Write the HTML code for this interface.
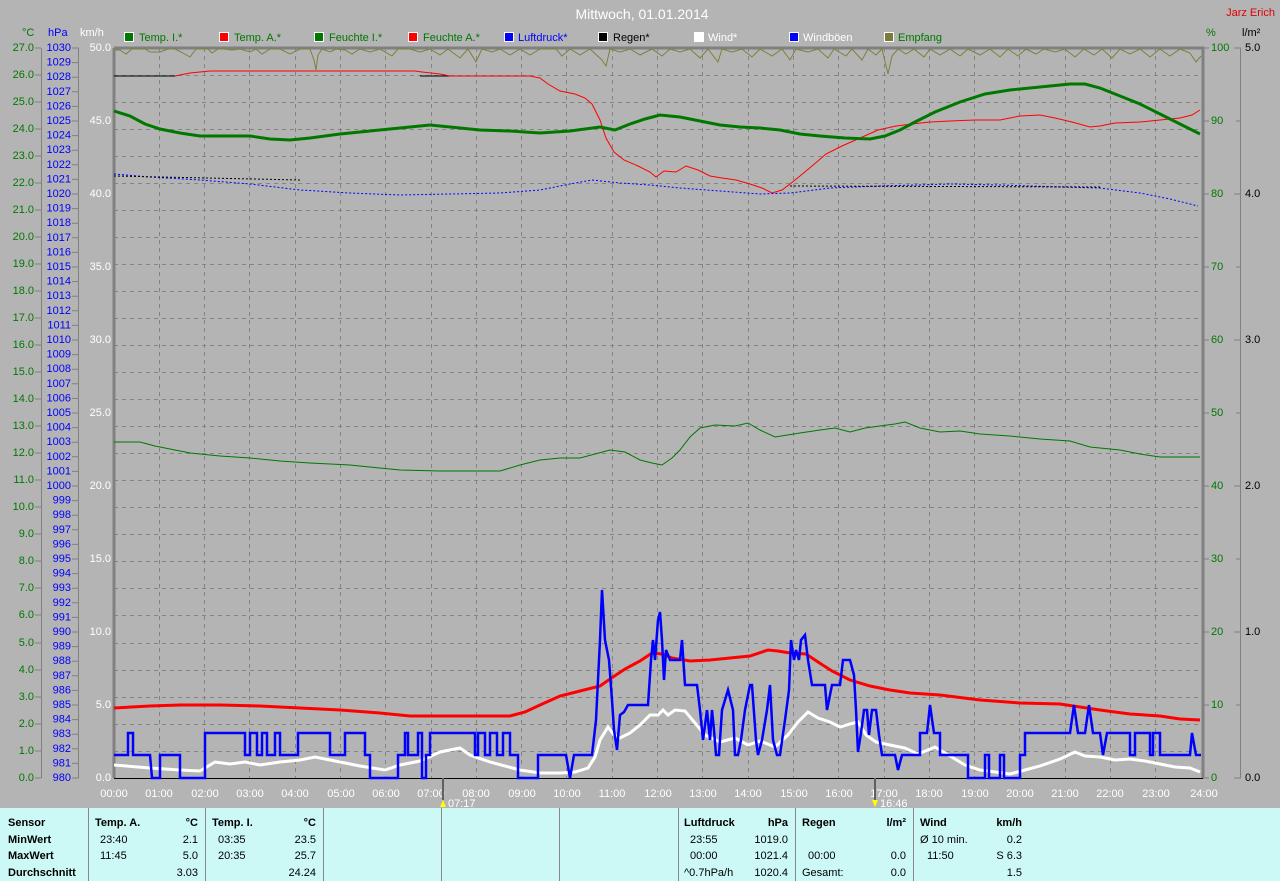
<!DOCTYPE html>
<html><head><meta charset="utf-8"><style>
body{margin:0;width:1280px;height:881px;overflow:hidden;background:#b4b4b4;font-family:"Liberation Sans",sans-serif}
svg{position:absolute;left:0;top:0}
.l{font-size:11px;text-anchor:end;dominant-baseline:central}
.r{font-size:11px;dominant-baseline:central}
.h{font-size:11px;fill:#fff;text-anchor:middle}
.p{font-size:11px;fill:#000}
.b{font-weight:bold}
</style></head><body>
<svg width="1280" height="881" viewBox="0 0 1280 881">
<rect x="0" y="808" width="1280" height="73" fill="#ccf9f5"/>
<g stroke="#888" stroke-width="1">
<line x1="88.5" y1="808" x2="88.5" y2="881"/><line x1="205.5" y1="808" x2="205.5" y2="881"/><line x1="323.5" y1="808" x2="323.5" y2="881"/><line x1="441.5" y1="808" x2="441.5" y2="881"/><line x1="559.5" y1="808" x2="559.5" y2="881"/><line x1="678.5" y1="808" x2="678.5" y2="881"/><line x1="795.5" y1="808" x2="795.5" y2="881"/><line x1="913.5" y1="808" x2="913.5" y2="881"/>
</g>
<g class="p">
<text x="8" y="826" class="b">Sensor</text><text x="8" y="843" class="b">MinWert</text><text x="8" y="859" class="b">MaxWert</text><text x="8" y="876" class="b">Durchschnitt</text>
<text x="95" y="826" class="b">Temp. A.</text><text x="198" y="826" class="b" text-anchor="end">°C</text>
<text x="100" y="843">23:40</text><text x="198" y="843" text-anchor="end">2.1</text>
<text x="100" y="859">11:45</text><text x="198" y="859" text-anchor="end">5.0</text>
<text x="198" y="876" text-anchor="end">3.03</text>
<text x="212" y="826" class="b">Temp. I.</text><text x="316" y="826" class="b" text-anchor="end">°C</text>
<text x="218" y="843">03:35</text><text x="316" y="843" text-anchor="end">23.5</text>
<text x="218" y="859">20:35</text><text x="316" y="859" text-anchor="end">25.7</text>
<text x="316" y="876" text-anchor="end">24.24</text>
<text x="684" y="826" class="b">Luftdruck</text><text x="788" y="826" class="b" text-anchor="end">hPa</text>
<text x="690" y="843">23:55</text><text x="788" y="843" text-anchor="end">1019.0</text>
<text x="690" y="859">00:00</text><text x="788" y="859" text-anchor="end">1021.4</text>
<text x="684" y="876">^0.7hPa/h</text><text x="788" y="876" text-anchor="end">1020.4</text>
<text x="802" y="826" class="b">Regen</text><text x="906" y="826" class="b" text-anchor="end">l/m²</text>
<text x="808" y="859">00:00</text><text x="906" y="859" text-anchor="end">0.0</text>
<text x="802" y="876">Gesamt:</text><text x="906" y="876" text-anchor="end">0.0</text>
<text x="920" y="826" class="b">Wind</text><text x="1022" y="826" class="b" text-anchor="end">km/h</text>
<text x="920" y="843">Ø 10 min.</text><text x="1022" y="843" text-anchor="end">0.2</text>
<text x="927" y="859">11:50</text><text x="1022" y="859" text-anchor="end">S 6.3</text>
<text x="1022" y="876" text-anchor="end">1.5</text>
</g>
<text x="642" y="19" font-size="14" fill="#fff" text-anchor="middle">Mittwoch, 01.01.2014</text>
<text x="1275" y="16" font-size="11" fill="#e00000" text-anchor="end">Jarz Erich</text>
<g font-size="11">
<text x="22" y="36" fill="#007800">°C</text><text x="48" y="36" fill="#0000ff">hPa</text><text x="80" y="36" fill="#fff">km/h</text>
<text x="1206" y="36" fill="#007800">%</text><text x="1242" y="36" fill="#000">l/m²</text>
</g>
<g font-size="11">
<rect x="124.5" y="32.5" width="9" height="9" fill="#007800" stroke="#fff"/><text x="139" y="41" fill="#007800">Temp. I.*</text>
<rect x="219.5" y="32.5" width="9" height="9" fill="#ff0000" stroke="#fff"/><text x="234" y="41" fill="#007800">Temp. A.*</text>
<rect x="314.5" y="32.5" width="9" height="9" fill="#007800" stroke="#fff"/><text x="329" y="41" fill="#007800">Feuchte I.*</text>
<rect x="408.5" y="32.5" width="9" height="9" fill="#ff0000" stroke="#fff"/><text x="423" y="41" fill="#007800">Feuchte A.*</text>
<rect x="504.5" y="32.5" width="9" height="9" fill="#0000ff" stroke="#fff"/><text x="518" y="41" fill="#0000ff">Luftdruck*</text>
<rect x="598.5" y="32.5" width="9" height="9" fill="#000" stroke="#fff"/><text x="613" y="41" fill="#000">Regen*</text>
<rect x="694.5" y="32.5" width="9" height="9" fill="#fff" stroke="#fff"/><text x="708" y="41" fill="#fff">Wind*</text>
<rect x="789.5" y="32.5" width="9" height="9" fill="#0000ff" stroke="#fff"/><text x="803" y="41" fill="#fff">Windböen</text>
<rect x="884.5" y="32.5" width="9" height="9" fill="#7a7a3a" stroke="#fff"/><text x="898" y="41" fill="#007800">Empfang</text>
</g>
<g stroke="#848484" stroke-dasharray="4,4" stroke-width="1">
<path d="M114 75.5H1201M114 102.5H1201M114 129.5H1201M114 156.5H1201M114 183.5H1201M114 210.5H1201M114 237.5H1201M114 264.5H1201M114 291.5H1201M114 318.5H1201M114 345.5H1201M114 372.5H1201M114 399.5H1201M114 426.5H1201M114 453.5H1201M114 480.5H1201M114 507.5H1201M114 534.5H1201M114 561.5H1201M114 588.5H1201M114 615.5H1201M114 643.5H1201M114 670.5H1201M114 697.5H1201M114 724.5H1201M114 751.5H1201"/>
<path d="M159.5 48V778M204.5 48V778M249.5 48V778M295.5 48V778M340.5 48V778M385.5 48V778M431.5 48V778M476.5 48V778M521.5 48V778M566.5 48V778M612.5 48V778M657.5 48V778M702.5 48V778M748.5 48V778M793.5 48V778M838.5 48V778M884.5 48V778M929.5 48V778M974.5 48V778M1019.5 48V778M1065.5 48V778M1110.5 48V778M1155.5 48V778"/>
</g>
<g stroke="#808080" stroke-width="3" fill="none"><path d="M114 48V778M114 48H1203V778"/></g>
<line x1="114" y1="778.5" x2="1203" y2="778.5" stroke="#000"/>
<g stroke="#808080" fill="none">
<line x1="41.5" y1="48" x2="41.5" y2="778"/><line x1="78.5" y1="48" x2="78.5" y2="778"/>
<path d="M35 48H41M35 75H41M35 102H41M35 129H41M35 156H41M35 183H41M35 210H41M35 237H41M35 264H41M35 291H41M35 318H41M35 345H41M35 372H41M35 399H41M35 426H41M35 453H41M35 480H41M35 507H41M35 534H41M35 561H41M35 588H41M35 615H41M35 643H41M35 670H41M35 697H41M35 724H41M35 751H41M35 778H41"/>
<path d="M72 48H79M72 62.6H79M72 77.2H79M72 91.8H79M72 106.4H79M72 121H79M72 135.6H79M72 150.2H79M72 164.8H79M72 179.4H79M72 194H79M72 208.6H79M72 223.2H79M72 237.8H79M72 252.4H79M72 267H79M72 281.6H79M72 296.2H79M72 310.8H79M72 325.4H79M72 340H79M72 354.6H79M72 369.2H79M72 383.8H79M72 398.4H79M72 413H79M72 427.6H79M72 442.2H79M72 456.8H79M72 471.4H79M72 486H79M72 500.6H79M72 515.2H79M72 529.8H79M72 544.4H79M72 559H79M72 573.6H79M72 588.2H79M72 602.8H79M72 617.4H79M72 632H79M72 646.6H79M72 661.2H79M72 675.8H79M72 690.4H79M72 705H79M72 719.6H79M72 734.2H79M72 748.8H79M72 763.4H79M72 778H79"/>
<path d="M1203 48H1209M1203 121H1209M1203 194H1209M1203 267H1209M1203 340H1209M1203 413H1209M1203 486H1209M1203 559H1209M1203 632H1209M1203 705H1209M1203 778H1209"/>
<line x1="1240.5" y1="48" x2="1240.5" y2="778"/>
<path d="M1234 48H1241M1234 194H1241M1234 340H1241M1234 486H1241M1234 632H1241M1234 778H1241M1236 121H1241M1236 267H1241M1236 413H1241M1236 559H1241M1236 705H1241"/>
</g>
<g class="l" fill="#007800">
<text x="34" y="48">27.0</text><text x="34" y="75">26.0</text><text x="34" y="102">25.0</text><text x="34" y="129">24.0</text><text x="34" y="156">23.0</text><text x="34" y="183">22.0</text><text x="34" y="210">21.0</text><text x="34" y="237">20.0</text><text x="34" y="264">19.0</text><text x="34" y="291">18.0</text><text x="34" y="318">17.0</text><text x="34" y="345">16.0</text><text x="34" y="372">15.0</text><text x="34" y="399">14.0</text><text x="34" y="426">13.0</text><text x="34" y="453">12.0</text><text x="34" y="480">11.0</text><text x="34" y="507">10.0</text><text x="34" y="534">9.0</text><text x="34" y="561">8.0</text><text x="34" y="588">7.0</text><text x="34" y="615">6.0</text><text x="34" y="643">5.0</text><text x="34" y="670">4.0</text><text x="34" y="697">3.0</text><text x="34" y="724">2.0</text><text x="34" y="751">1.0</text><text x="34" y="778">0.0</text>
</g>
<g class="l" fill="#0000ff">
<text x="71" y="48">1030</text><text x="71" y="62.6">1029</text><text x="71" y="77.2">1028</text><text x="71" y="91.8">1027</text><text x="71" y="106.4">1026</text><text x="71" y="121">1025</text><text x="71" y="135.6">1024</text><text x="71" y="150.2">1023</text><text x="71" y="164.8">1022</text><text x="71" y="179.4">1021</text><text x="71" y="194">1020</text><text x="71" y="208.6">1019</text><text x="71" y="223.2">1018</text><text x="71" y="237.8">1017</text><text x="71" y="252.4">1016</text><text x="71" y="267">1015</text><text x="71" y="281.6">1014</text><text x="71" y="296.2">1013</text><text x="71" y="310.8">1012</text><text x="71" y="325.4">1011</text><text x="71" y="340">1010</text><text x="71" y="354.6">1009</text><text x="71" y="369.2">1008</text><text x="71" y="383.8">1007</text><text x="71" y="398.4">1006</text><text x="71" y="413">1005</text><text x="71" y="427.6">1004</text><text x="71" y="442.2">1003</text><text x="71" y="456.8">1002</text><text x="71" y="471.4">1001</text><text x="71" y="486">1000</text><text x="71" y="500.6">999</text><text x="71" y="515.2">998</text><text x="71" y="529.8">997</text><text x="71" y="544.4">996</text><text x="71" y="559">995</text><text x="71" y="573.6">994</text><text x="71" y="588.2">993</text><text x="71" y="602.8">992</text><text x="71" y="617.4">991</text><text x="71" y="632">990</text><text x="71" y="646.6">989</text><text x="71" y="661.2">988</text><text x="71" y="675.8">987</text><text x="71" y="690.4">986</text><text x="71" y="705">985</text><text x="71" y="719.6">984</text><text x="71" y="734.2">983</text><text x="71" y="748.8">982</text><text x="71" y="763.4">981</text><text x="71" y="778">980</text>
</g>
<g class="l" fill="#fff">
<text x="111" y="48">50.0</text><text x="111" y="121">45.0</text><text x="111" y="194">40.0</text><text x="111" y="267">35.0</text><text x="111" y="340">30.0</text><text x="111" y="413">25.0</text><text x="111" y="486">20.0</text><text x="111" y="559">15.0</text><text x="111" y="632">10.0</text><text x="111" y="705">5.0</text><text x="111" y="778">0.0</text>
</g>
<g class="r" fill="#007800">
<text x="1211" y="48">100</text><text x="1211" y="121">90</text><text x="1211" y="194">80</text><text x="1211" y="267">70</text><text x="1211" y="340">60</text><text x="1211" y="413">50</text><text x="1211" y="486">40</text><text x="1211" y="559">30</text><text x="1211" y="632">20</text><text x="1211" y="705">10</text><text x="1211" y="778">0</text>
</g>
<g class="r" fill="#000">
<text x="1245" y="48">5.0</text><text x="1245" y="194">4.0</text><text x="1245" y="340">3.0</text><text x="1245" y="486">2.0</text><text x="1245" y="632">1.0</text><text x="1245" y="778">0.0</text>
</g>
<g class="h">
<text x="114" y="797">00:00</text><text x="159" y="797">01:00</text><text x="205" y="797">02:00</text><text x="250" y="797">03:00</text><text x="295" y="797">04:00</text><text x="341" y="797">05:00</text><text x="386" y="797">06:00</text><text x="431" y="797">07:00</text><text x="476" y="797">08:00</text><text x="522" y="797">09:00</text><text x="567" y="797">10:00</text><text x="612" y="797">11:00</text><text x="658" y="797">12:00</text><text x="703" y="797">13:00</text><text x="748" y="797">14:00</text><text x="794" y="797">15:00</text><text x="839" y="797">16:00</text><text x="884" y="797">17:00</text><text x="929" y="797">18:00</text><text x="975" y="797">19:00</text><text x="1020" y="797">20:00</text><text x="1065" y="797">21:00</text><text x="1110" y="797">22:00</text><text x="1156" y="797">23:00</text><text x="1204" y="797">24:00</text>
</g>
<line x1="443" y1="778" x2="443" y2="800" stroke="#606060" stroke-width="2"/>
<line x1="875" y1="778" x2="875" y2="800" stroke="#606060" stroke-width="2"/>
<polygon points="443,800 440,807 446,807" fill="#ffff00"/><polygon points="875,807 872,800 878,800" fill="#ffff00"/>
<text x="448" y="807" font-size="11" fill="#fff">07:17</text><text x="880" y="807" font-size="11" fill="#fff">16:46</text>
<path fill="none" stroke="#80803a" stroke-width="1" d="M114 50L120 50L126 54L132 49L145 49L150 52L160 52L168 49L175 49L181 52L190 57L196 49L202 49L208 49L212 53L218 49L224 49L232 50L240 49L250 52L256 49L262 54L270 49L280 49L290 54L300 49L310 49L314 60L316 70L318 55L322 49L330 52L336 49L345 50L352 54L360 49L370 52L380 49L392 56L398 49L410 49L420 52L430 49L440 55L448 49L460 58L468 49L476 62L482 49L492 52L500 49L510 55L520 49L530 55L540 49L556 49L562 56L570 49L580 55L590 49L602 60L606 66L610 49L620 52L630 49L640 55L652 49L662 56L670 49L680 52L690 49L700 58L708 49L718 62L722 49L732 52L742 49L752 57L760 49L772 56L782 49L790 60L796 49L808 52L818 49L828 58L834 49L846 56L852 49L862 60L868 49L876 55L882 49L888 74L892 56L898 49L906 54L914 49L924 57L930 49L940 55L950 49L960 56L968 49L980 55L990 49L1000 57L1008 49L1018 56L1026 49L1036 54L1044 49L1055 52L1065 49L1075 57L1084 49L1094 55L1102 49L1112 58L1120 49L1130 54L1140 49L1150 57L1160 49L1170 56L1180 49L1190 53L1196 62L1201 56"/>
<path fill="none" stroke="#000" stroke-width="1" d="M114 76H175M420 76H530"/>
<path fill="none" stroke="#ff0000" stroke-width="1" d="M175 76L190 73L210 71L415 71L422 72L440 74L450 76L530 76L540 78L548 84L560 91L575 94L585 98L592 104L600 120L606 138L614 152L624 160L638 166L650 172L656 177L664 171L676 172L686 166L698 170L710 176L722 178L736 180L750 184L762 188L772 193L782 190L790 184L800 176L812 166L826 154L842 146L860 138L878 130L896 126L912 124L930 122L950 121L975 120L1000 120L1020 116L1040 115L1055 118L1072 122L1090 127L1100 126L1115 123L1140 122L1160 120L1180 118L1192 115L1200 110"/>
<path fill="none" stroke="#0000ff" stroke-width="1" stroke-dasharray="2,2" d="M114 174L150 177L200 180L250 184L300 190L350 193L400 195L450 194L500 193L540 190L570 184L592 180L620 183L650 185L680 188L720 191L760 194L790 193L830 188L880 186L950 184L1000 185L1060 187L1100 188L1140 193L1170 199L1198 206"/>
<path fill="none" stroke="#000" stroke-width="1" stroke-dasharray="2,2" d="M114 176L300 180M790 186L1100 187"/>
<path fill="none" stroke="#007800" stroke-width="3" d="M114 111L130 116L145 124L160 129L180 133L200 136L250 136L270 139L290 140L310 138L340 134L370 131L400 128L430 125L450 127L480 130L510 131L540 133L570 131L600 127L615 130L630 124L645 119L660 115L680 117L700 121L720 125L740 127L760 128L780 130L800 134L820 136L845 138L870 139L885 136L900 130L915 122L935 112L960 102L985 94L1010 90L1040 87L1070 84L1085 84L1100 88L1120 96L1140 104L1160 114L1180 124L1200 134"/>
<path fill="none" stroke="#007800" stroke-width="1" d="M114 442L140 442L155 446L170 449L190 453L220 456L250 458L280 461L310 463L350 465L400 470L440 471L500 471L520 465L540 460L560 458L580 458L595 454L610 450L625 452L640 460L652 463L662 465L672 458L680 450L690 437L700 428L715 425L735 426L748 423L760 430L775 437L800 433L820 430L835 428L850 432L865 428L880 426L895 424L905 422L920 428L940 432L960 431L980 434L1010 436L1040 439L1070 441L1090 447L1120 450L1140 454L1160 457L1200 457"/>
<path fill="none" stroke="#ff0000" stroke-width="3" d="M114 708L150 706L180 705L220 705L260 706L300 708L340 710L380 713L410 716L430 716L480 716L510 716L525 712L540 705L560 696L580 691L600 686L613 677L625 669L640 661L652 653L662 654L672 658L690 661L710 660L730 658L750 656L768 650L778 651L790 653L806 654L818 662L832 671L850 680L870 686L890 690L910 693L940 695L980 700L1020 703L1060 704L1100 710L1130 714L1160 716L1180 719L1200 720"/>
<path fill="none" stroke="#fff" stroke-width="3" d="M114 765L150 768L180 770L200 771L215 762L230 764L245 762L260 765L280 762L300 760L315 757L330 760L340 762L360 766L385 770L400 765L420 761L440 752L460 748L470 755L490 762L520 770L540 773L560 773L575 772L588 768L595 757L600 740L608 727L614 735L620 738L630 733L640 725L650 715L658 715L663 710L668 715L675 710L685 711L695 723L705 735L720 742L735 738L748 745L760 741L775 747L788 735L798 722L808 712L818 718L830 722L840 727L850 724L858 722L866 735L876 742L890 745L905 748L918 754L935 747L950 756L965 765L980 770L995 772L1010 774L1025 770L1040 766L1060 759L1075 752L1085 756L1100 757L1115 760L1130 759L1145 761L1160 764L1175 767L1190 768L1200 772"/>
<path fill="none" stroke="#0000ff" stroke-width="2.5" stroke-linejoin="miter" d="M114 755H128V733H133V755H150L152 778H160V755H180V778H205V733H245V755H250V733H257V755H262V733H267V755H275V733H280V755H298V733H330V755H345V733H365V755H370V778H398V755H405V733H408V755H418V733H422V778H426V755H430V733H475V755H478V733H485V755H490V733H497V755H503V733H510V755H518V778H538V755H566L570 778L574 755H592L596 720L600 640L602 590L605 640L609 660L612 700L614 730L617 750L620 715L624 712L628 705L648 705L651 660L653 640L655 660L658 620L660 612L662 640L664 680L666 650L670 660H680L682 640L685 685H697L700 710L703 740L707 710L710 740L712 710L714 730L716 755L719 755L722 710L728 690L733 710L735 755L738 755L741 740L745 710L750 685L752 685L756 740L758 755L762 740L767 710L770 685L773 740L777 755L780 755L785 720L789 690L791 640L794 660L796 650L799 660L801 640L805 635L808 660L812 685H825L827 710L829 700L832 685H840L843 660H850L854 675L856 710L858 752L861 733L864 710L867 710L869 735L872 710L876 710L879 735L882 755H895L898 770L902 755H920V733H927L930 705L934 733H940V755H968V778H985V755H989V778H1000V755H1004V778H1020V755H1025V733H1070L1074 705L1078 733H1085L1089 705L1093 733H1100L1103 755L1107 733H1130V755H1135V733H1150V755H1153V733H1160V755H1190L1192 733L1196 755H1201"/>
</svg>
</body></html>
